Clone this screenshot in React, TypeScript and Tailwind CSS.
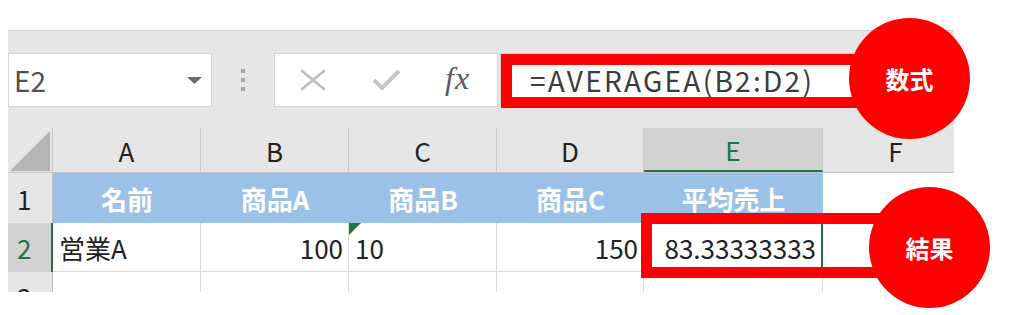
import React from "react";

const cols = [
  { id: "A", w: "w-[148px]" },
  { id: "B", w: "w-[148px]" },
  { id: "C", w: "w-[148px]" },
  { id: "D", w: "w-[147px]" },
  { id: "E", w: "w-[179px]" },
];

export default function App() {
  const font = "font-['Noto_Sans_CJK_JP',sans-serif]";
  return (
    <div className={`relative w-[1024px] h-[315px] bg-white overflow-hidden ${font}`}>
      <div className="pt-[30px] pl-[8px]">
        <div className="w-[946px] h-[262px] overflow-hidden flex flex-col">
          {/* Formula bar */}
          <div className="h-[98px] shrink-0 bg-[#e6e6e6] border-t border-[#d2d2d2] flex items-start pt-[22px]">
            <div className="w-[204px] h-[54px] bg-white border border-[#d4d4d4] flex items-center justify-between pl-[5px] pr-[9px]">
              <span className="text-[28px] leading-none text-[#505050]">E2</span>
              <svg width="15" height="7" viewBox="0 0 15 7">
                <path d="M0 0 L15 0 L7.5 7 Z" fill="#6a6a6a" />
              </svg>
            </div>
            <div className="w-[62px] h-[54px] flex flex-col items-center justify-center gap-[5px]">
              <div className="w-[4px] h-[4px] bg-[#a8a8a8]" />
              <div className="w-[4px] h-[4px] bg-[#a8a8a8]" />
              <div className="w-[4px] h-[4px] bg-[#a8a8a8]" />
            </div>
            <div className="w-[224px] h-[54px] bg-white border border-[#d4d4d4] flex items-center pl-[25px]">
              <svg width="26" height="22" viewBox="0 0 26 22">
                <path d="M2 2 L24 20 M24 2 L2 20" stroke="#bdbdbd" strokeWidth="2.6" strokeLinecap="round" />
              </svg>
              <svg className="ml-[46px]" width="30" height="22" viewBox="0 0 30 22">
                <path d="M2 11 L10 19 L27 2" stroke="#c6c6c6" strokeWidth="4" fill="none" strokeLinejoin="round" />
              </svg>
              <span className="ml-[43px] font-['Liberation_Serif',serif] italic text-[32px] leading-none text-[#5a5a5a] tracking-[1px] -mt-[4px]">
                fx
              </span>
            </div>
            <div className="flex-1 ml-[2px] h-[54px] bg-white border border-[#d4d4d4] flex items-center pl-[29px]">
              <span className="text-[28px] leading-none text-[#3c3c3c] tracking-[2.3px]">
                =AVERAGEA(B2:D2)
              </span>
            </div>
          </div>

          {/* Column headers */}
          <div className="h-[45px] shrink-0 flex bg-[#e6e6e6] border-b border-[#c4c4c4]">
            <div className="w-[45px] shrink-0 border-r border-[#c4c4c4] flex items-end justify-start pl-[2px] pb-[1px]">
              <svg width="40" height="40" viewBox="0 0 40 40">
                <path d="M0 40 L40 40 L40 0 Z" fill="#b5b5b5" />
              </svg>
            </div>
            {cols.map((c) => (
              <div
                key={c.id}
                className={`${c.w} shrink-0 flex items-center justify-center text-[26px] border-r border-[#c8c8c8] ${
                  c.id === "E"
                    ? "bg-[#d2d2d2] text-[#217346] border-b-2 border-b-[#217346]"
                    : "text-[#222]"
                }`}
              >
                {c.id}
              </div>
            ))}
            <div className="flex-1 flex items-center justify-center text-[26px] text-[#222] pl-[14px]">F</div>
          </div>

          {/* Row 1 */}
          <div className="h-[50px] shrink-0 flex">
            <div className="w-[45px] shrink-0 bg-[#e6e6e6] border-r border-[#c4c4c4] flex items-center pl-[9px] text-[26px] text-[#222]">
              1
            </div>
            {["名前", "商品A", "商品B", "商品C", "平均売上"].map((t, i) => (
              <div
                key={t}
                className={`${cols[i].w} shrink-0 bg-[#9bc2e6] flex items-center justify-center text-white font-bold text-[26px]`}
              >
                {t}
              </div>
            ))}
            <div className="flex-1 bg-white" />
          </div>

          {/* Row 2 */}
          <div className="h-[49px] shrink-0 flex">
            <div className="w-[45px] shrink-0 bg-[#d2d2d2] border-r-2 border-[#217346] flex items-center pl-[9px] text-[26px] text-[#217346]">
              2
            </div>
            <div className="w-[148px] shrink-0 border-r border-b border-[#dadada] flex items-center pl-[6px] text-[26px] text-[#222]">
              営業A
            </div>
            <div className="w-[148px] shrink-0 border-r border-b border-[#dadada] flex items-center justify-end pr-[5px] text-[26px] text-[#222]">
              100
            </div>
            <div className="relative w-[148px] shrink-0 border-r border-b border-[#dadada] flex items-center pl-[6px] text-[26px] text-[#222]">
              <svg className="absolute left-0 top-0" width="12" height="12" viewBox="0 0 12 12">
                <path d="M0 0 L12 0 L0 12 Z" fill="#1e7a3a" />
              </svg>
              10
            </div>
            <div className="w-[147px] shrink-0 border-r border-b border-[#dadada] flex items-center justify-end pr-[5px] text-[26px] text-[#222]">
              150
            </div>
            <div className="relative w-[179px] shrink-0 border-r border-b border-[#dadada] flex items-center justify-end pr-[6px] text-[26px] text-[#222]">
              <div className="absolute -left-[1px] -top-[1px] right-[-1px] bottom-[-1px] border-2 border-[#217346]" />
              <div className="absolute right-[-3px] bottom-[-3px] w-[6px] h-[6px] bg-[#217346] border border-white" />
              83.33333333
            </div>
            <div className="flex-1 border-b border-[#dadada]" />
          </div>

          {/* Row 3 */}
          <div className="h-[49px] shrink-0 flex">
            <div className="w-[45px] shrink-0 bg-[#e6e6e6] border-r border-[#c4c4c4] flex items-center pl-[9px] text-[26px] text-[#222]">
              3
            </div>
            {cols.map((c) => (
              <div key={c.id} className={`${c.w} shrink-0 border-r border-[#dadada]`} />
            ))}
            <div className="flex-1" />
          </div>
        </div>
      </div>

      {/* Annotations */}
      <div className="absolute left-[501px] top-[54px] w-[400px] h-[54px] border-[11px] border-[#ff0000]" />
      <div className="absolute left-[641px] top-[213px] w-[260px] h-[65px] border-[11px] border-[#ff0000]" />
      <div className="absolute left-[849px] top-[18px] w-[121px] h-[121px] rounded-full bg-[#ff0000] flex items-center justify-center text-white font-bold text-[24px]">
        数式
      </div>
      <div className="absolute left-[869px] top-[187px] w-[121px] h-[121px] rounded-full bg-[#ff0000] flex items-center justify-center text-white font-bold text-[24px]">
        結果
      </div>
    </div>
  );
}
